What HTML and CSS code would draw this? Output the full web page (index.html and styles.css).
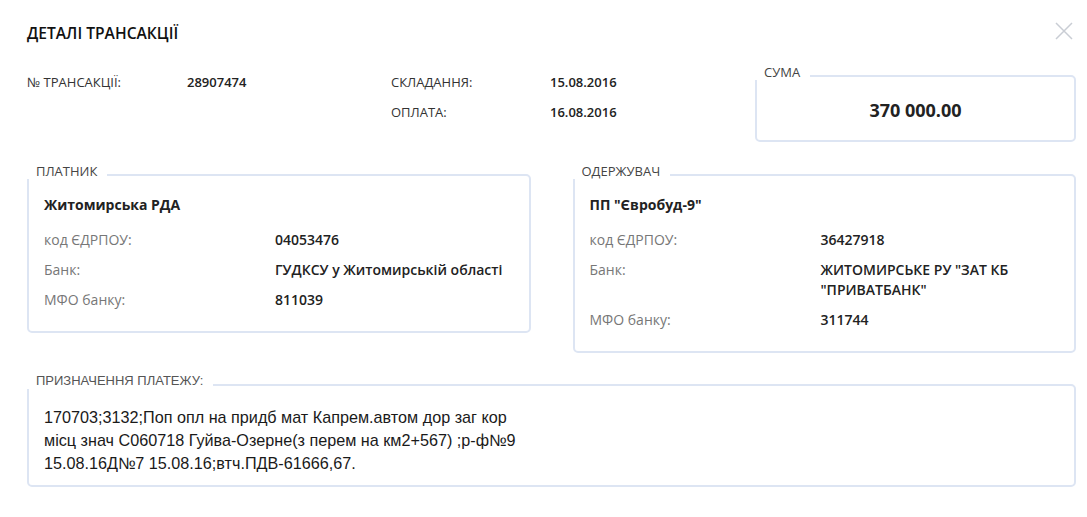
FILE: index.html
```html
<!DOCTYPE html>
<html lang="uk">
<head>
  <meta charset="UTF-8">
  <meta name="viewport" content="width=device-width, initial-scale=1">
  <title>Деталі трансакції</title>
  <link rel="stylesheet" href="styles.css">
</head>
<body>
  <div class="modal">
    <div class="modal-head">
      <h2>ДЕТАЛІ ТРАНСАКЦІЇ</h2>
      <button type="button" class="close" aria-label="Закрити">
        <svg width="18" height="18" viewBox="0 0 18 18"><path d="M1 1L17 17M17 1L1 17" stroke="#c9cdd4" stroke-width="1.5" fill="none"/></svg>
      </button>
    </div>

    <div class="summary">
      <div class="info">
        <span class="lbl">№ ТРАНСАКЦІЇ:</span>
        <span class="val">28907474</span>
        <span class="lbl">СКЛАДАННЯ:</span>
        <span class="val">15.08.2016</span>
        <span></span>
        <span></span>
        <span class="lbl">ОПЛАТА:</span>
        <span class="val">16.08.2016</span>
      </div>
      <div class="box sum-box">
        <div class="legend">СУМА</div>
        <div class="amount">370 000.00</div>
      </div>
    </div>

    <div class="parties">
      <div class="box party">
        <div class="legend">ПЛАТНИК</div>
        <div class="name">Житомирська РДА</div>
        <div class="rows">
          <span class="key">код ЄДРПОУ:</span><span class="v">04053476</span>
          <span class="key">Банк:</span><span class="v">ГУДКСУ у Житомирській області</span>
          <span class="key">МФО банку:</span><span class="v">811039</span>
        </div>
      </div>
      <div class="box party">
        <div class="legend">ОДЕРЖУВАЧ</div>
        <div class="name">ПП "Євробуд-9"</div>
        <div class="rows">
          <span class="key">код ЄДРПОУ:</span><span class="v">36427918</span>
          <span class="key">Банк:</span><span class="v">ЖИТОМИРСЬКЕ РУ "ЗАТ КБ "ПРИВАТБАНК"</span>
          <span class="key">МФО банку:</span><span class="v">311744</span>
        </div>
      </div>
    </div>

    <div class="box purpose">
      <div class="legend legend-sm">ПРИЗНАЧЕННЯ ПЛАТЕЖУ:</div>
      <p>170703;3132;Поп опл на придб мат Капрем.автом дор заг кор<br>місц знач С060718 Гуйва-Озерне(з перем на км2+567) ;р-ф№9<br>15.08.16Д№7 15.08.16;втч.ПДВ-61666,67.</p>
    </div>
  </div>
</body>
</html>
```

FILE: styles.css
```css
body { margin: 0; background: #fff; font-family: 'Open Sans', sans-serif; font-size: 13px; color: #222; }
.modal { padding: 0 11px 30px 27px; }
.modal-head { display: flex; justify-content: space-between; align-items: flex-start; padding-top: 22px; }
.modal-head h2 { margin: 0; font-size: 15.6px; font-weight: 600; line-height: 22px; color: #111; }
.close { background: none; border: none; padding: 0; margin: 0 3px 0 0; width: 18px; height: 18px; cursor: pointer; }
.close svg { display: block; }

.summary { display: flex; align-items: flex-start; margin-top: 31px; }
.info { flex: 1; display: grid; grid-template-columns: 160px 204px 159px 1fr; grid-auto-rows: 30px; align-items: center; margin-top: -8px; }
.lbl { color: #333; font-weight: 400; }
.val { font-weight: 600; color: #222; }

.box { position: relative; border: 2px solid #dde5f3; border-radius: 5px; background: #fff; }
.legend { position: absolute; left: -2px; top: -13px; padding: 0 10px 0 9px; background: #fff; line-height: 16px; font-size: 13px; color: #444; }
.legend-sm { font-family: 'Liberation Sans', Arial, sans-serif; font-size: 13px; color: #555; }

.sum-box { width: 317px; height: 63px; display: flex; align-items: center; justify-content: center; }
.amount { font-size: 18px; font-weight: 700; color: #222; margin-top: 2px; }

.parties { display: flex; align-items: flex-start; gap: 42px; margin-top: 32px; }
.party { flex: 1; padding: 14px 15px 16px 15px; font-size: 14px; }
.name { font-weight: 700; line-height: 30px; }
.rows { display: grid; grid-template-columns: 231px 1fr; margin-top: 5px; }
.rows span { padding: 5px 0; line-height: 20px; }
.key { color: #777; }
.v { font-weight: 600; color: #222; }

.purpose { margin-top: 31px; padding: 20px 15px 10px 15px; }
.purpose p { margin: 0; font-family: 'Liberation Sans', Arial, sans-serif; font-size: 16.2px; line-height: 23px; color: #1a1a1a; }
```
